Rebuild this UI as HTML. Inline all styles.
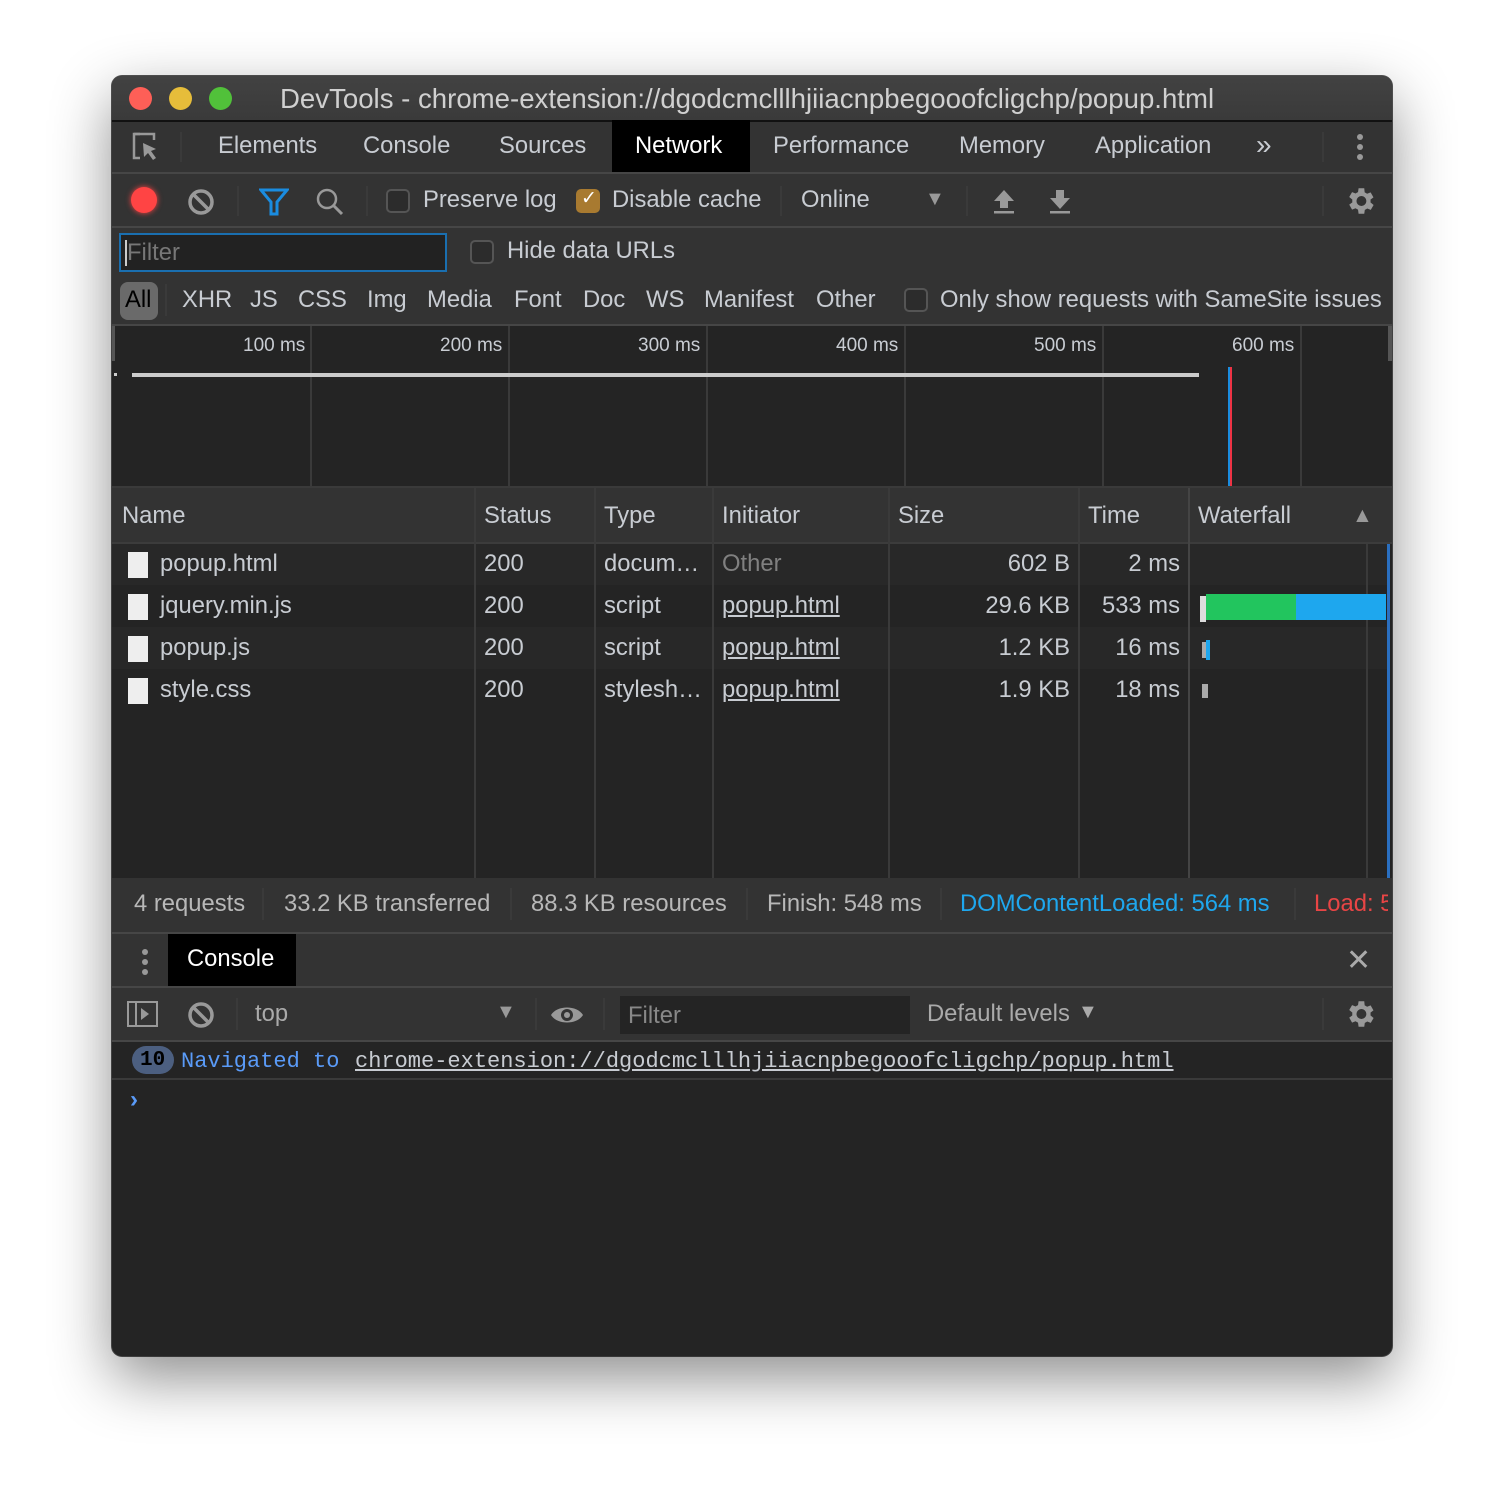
<!DOCTYPE html>
<html><head><meta charset="utf-8"><style>
*{margin:0;padding:0;box-sizing:border-box}
body{width:1504px;height:1504px;background:#fff;font-family:"Liberation Sans",Arial,sans-serif;position:relative;overflow:hidden}
.w{position:absolute;left:112px;top:76px;width:1280px;height:1280px;border-radius:10px;background:#242424;overflow:hidden;box-shadow:0 22px 60px rgba(0,0,0,.45),0 0 0 1px #555}
.a{position:absolute}
.t{position:absolute;white-space:nowrap;line-height:1;font-size:23.8px;color:#c8ccd2}
.hl{position:absolute;height:2px;background:#464646;left:0;width:1280px}
.vl{position:absolute;width:2px;background:#3a3a3a}
.cb{position:absolute;width:24px;height:24px;border:2px solid #555;border-radius:5px;background:#2c2c2c}
</style></head><body>
<div class="w">
<div class="a" style="left:0;top:0;width:1280px;height:44px;background:linear-gradient(#424242,#3a3a3a)"></div>
<div class="a" style="left:0;top:44px;width:1280px;height:2px;background:#111"></div>
<div class="a" style="left:17px;top:11px;width:23px;height:23px;border-radius:50%;background:#fe5f57"></div>
<div class="a" style="left:57px;top:11px;width:23px;height:23px;border-radius:50%;background:#e6bd3a"></div>
<div class="a" style="left:97px;top:11px;width:23px;height:23px;border-radius:50%;background:#51c13a"></div>
<div class="t" style="left:168px;top:9px;font-size:27.6px;color:#d0d0d0">DevTools - chrome-extension://dgodcmclllhjiiacnpbegooofcligchp/popup.html</div>
<div class="a" style="left:0;top:46px;width:1280px;height:50px;background:#333"></div>
<div class="a" style="left:500px;top:44px;width:138px;height:52px;background:#000"></div>
<svg class="a" style="left:18px;top:56px" width="30" height="32" viewBox="0 0 30 32"><path d="M10 2H4v24h6" fill="none" stroke="#999" stroke-width="2.5"/><path d="M4 2h20v6" fill="none" stroke="#999" stroke-width="2.5"/><path d="M13 11l13 6-5 2 5 7-3 2-5-7-4 4z" fill="#999"/></svg>
<div class="vl" style="left:68px;top:56px;height:30px"></div>
<div class="t" style="left:106px;top:58px;">Elements</div>
<div class="t" style="left:251px;top:58px">Console</div>
<div class="t" style="left:387px;top:58px">Sources</div>
<div class="t" style="left:523px;top:58px;color:#fff">Network</div>
<div class="t" style="left:661px;top:58px">Performance</div>
<div class="t" style="left:847px;top:58px">Memory</div>
<div class="t" style="left:983px;top:58px">Application</div>
<div class="t" style="left:1144px;top:55px;font-size:28px">»</div>
<div class="vl" style="left:1210px;top:56px;height:30px"></div>
<div class="a" style="left:1245px;top:58px;width:6px;height:6px;border-radius:3px;background:#999;box-shadow:0 10px #999,0 20px #999"></div>
<div class="hl" style="top:96px"></div>
<div class="a" style="left:0;top:98px;width:1280px;height:52px;background:#333"></div>
<div class="a" style="left:19px;top:111px;width:26px;height:26px;border-radius:50%;background:#f44;box-shadow:0 0 6px #f44"></div>
<svg class="a" style="left:75px;top:112px" width="28" height="28"><circle cx="14" cy="14" r="11" fill="none" stroke="#999" stroke-width="3.5"/><path d="M6 6l16 16" stroke="#999" stroke-width="3.5"/></svg>
<div class="vl" style="left:125px;top:110px;height:30px"></div>
<svg class="a" style="left:147px;top:112px" width="30" height="28"><path d="M2 2h26L18 14v12h-6V14z" fill="none" stroke="#1a8ce0" stroke-width="3"/></svg>
<svg class="a" style="left:203px;top:111px" width="30" height="30"><circle cx="12" cy="12" r="9" fill="none" stroke="#999" stroke-width="2.5"/><path d="M18 18l9 9" stroke="#999" stroke-width="3"/></svg>
<div class="vl" style="left:254px;top:110px;height:30px"></div>
<div class="cb" style="left:274px;top:113px"></div>
<div class="t" style="left:311px;top:112px">Preserve log</div>
<div class="a" style="left:464px;top:113px;width:24px;height:24px;border-radius:5px;background:#a87a30"></div>
<div class="t" style="left:469px;top:113px;font-size:19px;color:#fff">✓</div>
<div class="t" style="left:500px;top:112px">Disable cache</div>
<div class="vl" style="left:668px;top:110px;height:30px"></div>
<div class="t" style="left:689px;top:112px">Online</div>
<div class="t" style="left:813px;top:113px;font-size:20px;color:#999">▼</div>
<div class="vl" style="left:854px;top:110px;height:30px"></div>
<svg class="a" style="left:880px;top:112px" width="24" height="26"><path d="M12 2L2 13h6v7h8v-7h6z" fill="#999"/><rect x="2" y="23" width="20" height="2.5" fill="#999"/></svg>
<svg class="a" style="left:936px;top:112px" width="24" height="26"><path d="M12 21L2 10h6V2h8v8h6z" fill="#999"/><rect x="2" y="23" width="20" height="2.5" fill="#999"/></svg>
<div class="vl" style="left:1210px;top:110px;height:30px"></div>
<svg class="a" style="left:1231px;top:108px" width="34" height="34" viewBox="0 0 24 24"><path fill="#999" d="M19.4 13a7.5 7.5 0 0 0 0-2l2.1-1.6-2-3.5-2.5 1a7 7 0 0 0-1.7-1L15 3h-4l-.4 2.7a7 7 0 0 0-1.7 1l-2.5-1-2 3.5L6.6 11a7.5 7.5 0 0 0 0 2l-2.2 1.6 2 3.5 2.5-1a7 7 0 0 0 1.7 1L11 21h4l.4-2.7a7 7 0 0 0 1.7-1l2.5 1 2-3.5zM13 15.5a3.5 3.5 0 1 1 0-7 3.5 3.5 0 0 1 0 7z"/></svg>
<div class="hl" style="top:150px"></div>
<div class="a" style="left:0;top:152px;width:1280px;height:97px;background:#333"></div>
<div class="a" style="left:7px;top:157px;width:328px;height:39px;border:2px solid #1a6fb0;background:#222"></div>
<div class="a" style="left:13px;top:164px;width:2px;height:26px;background:#ccc"></div>
<div class="t" style="left:15px;top:165px;color:#777">Filter</div>
<div class="cb" style="left:358px;top:164px"></div>
<div class="t" style="left:395px;top:163px">Hide data URLs</div>
<div class="a" style="left:8px;top:206px;width:38px;height:38px;border-radius:8px;background:#6a6a6a"></div>
<div class="t" style="left:13px;top:212px;color:#000">All</div>
<div class="vl" style="left:53px;top:208px;height:32px"></div>
<div class="t" style="left:70px;top:212px">XHR</div>
<div class="t" style="left:138px;top:212px">JS</div>
<div class="t" style="left:186px;top:212px">CSS</div>
<div class="t" style="left:255px;top:212px">Img</div>
<div class="t" style="left:315px;top:212px">Media</div>
<div class="t" style="left:402px;top:212px">Font</div>
<div class="t" style="left:471px;top:212px">Doc</div>
<div class="t" style="left:534px;top:212px">WS</div>
<div class="t" style="left:592px;top:212px">Manifest</div>
<div class="t" style="left:704px;top:212px">Other</div>
<div class="cb" style="left:792px;top:212px"></div>
<div class="t" style="left:828px;top:212px">Only show requests with SameSite issues</div>
<div class="hl" style="top:248px"></div>
<div class="a" style="left:0;top:250px;width:1280px;height:161px;background:#242424"></div>
<div class="a" style="left:0;top:250px;width:3px;height:35px;background:#555"></div>
<div class="a" style="left:1276px;top:250px;width:4px;height:35px;background:#555"></div>
<div class="vl" style="left:198px;top:250px;height:161px"></div>
<div class="vl" style="left:396px;top:250px;height:161px"></div>
<div class="vl" style="left:594px;top:250px;height:161px"></div>
<div class="vl" style="left:792px;top:250px;height:161px"></div>
<div class="vl" style="left:990px;top:250px;height:161px"></div>
<div class="vl" style="left:1188px;top:250px;height:161px"></div>
<div class="t" style="left:131px;top:260px;font-size:19px">100 ms</div>
<div class="t" style="left:328px;top:260px;font-size:19px">200 ms</div>
<div class="t" style="left:526px;top:260px;font-size:19px">300 ms</div>
<div class="t" style="left:724px;top:260px;font-size:19px">400 ms</div>
<div class="t" style="left:922px;top:260px;font-size:19px">500 ms</div>
<div class="t" style="left:1120px;top:260px;font-size:19px">600 ms</div>
<div class="a" style="left:2px;top:297px;width:3px;height:3px;background:#ccc"></div>
<div class="a" style="left:20px;top:297px;width:1067px;height:4px;background:#ccc"></div>
<div class="a" style="left:1116px;top:291px;width:2px;height:120px;background:#1a8ce0"></div>
<div class="a" style="left:1118px;top:291px;width:2px;height:120px;background:#e34"></div>
<div class="a" style="left:0;top:410px;width:1280px;height:2px;background:#3a3a3a"></div>
<div class="a" style="left:0;top:412px;width:1280px;height:55px;background:#333"></div>
<div class="hl" style="top:466px;background:#3c3c3c"></div>
<div class="t" style="left:10px;top:428px">Name</div>
<div class="t" style="left:372px;top:428px">Status</div>
<div class="t" style="left:492px;top:428px">Type</div>
<div class="t" style="left:610px;top:428px">Initiator</div>
<div class="t" style="left:786px;top:428px">Size</div>
<div class="t" style="left:976px;top:428px">Time</div>
<div class="t" style="left:1086px;top:428px">Waterfall</div>
<div class="t" style="left:1240px;top:429px;font-size:21px;color:#999">▲</div>
<div class="a" style="left:0;top:468px;width:1276px;height:41px;background:#282828"></div>
<div class="a" style="left:0;top:509px;width:1276px;height:42px;background:#242424"></div>
<div class="a" style="left:0;top:551px;width:1276px;height:42px;background:#282828"></div>
<div class="a" style="left:0;top:593px;width:1276px;height:42px;background:#242424"></div>
<div class="vl" style="left:362px;top:412px;height:390px"></div>
<div class="vl" style="left:482px;top:412px;height:390px"></div>
<div class="vl" style="left:600px;top:412px;height:390px"></div>
<div class="vl" style="left:776px;top:412px;height:390px"></div>
<div class="vl" style="left:966px;top:412px;height:390px"></div>
<div class="vl" style="left:1076px;top:412px;height:390px;background:#444"></div>
<div class="vl" style="left:1254px;top:468px;height:334px"></div>
<div class="a" style="left:1275px;top:468px;width:3px;height:334px;background:#2a6fc0"></div>
<div class="a" style="left:16px;top:476px;width:20px;height:26px;background:#eee"></div>
<div class="a" style="left:16px;top:518px;width:20px;height:26px;background:#eee"></div>
<div class="a" style="left:16px;top:560px;width:20px;height:26px;background:#eee"></div>
<div class="a" style="left:16px;top:602px;width:20px;height:26px;background:#eee"></div>
<div class="t" style="left:48px;top:476px">popup.html</div>
<div class="t" style="left:48px;top:518px">jquery.min.js</div>
<div class="t" style="left:48px;top:560px">popup.js</div>
<div class="t" style="left:48px;top:602px">style.css</div>
<div class="t" style="left:372px;top:476px">200</div>
<div class="t" style="left:372px;top:518px">200</div>
<div class="t" style="left:372px;top:560px">200</div>
<div class="t" style="left:372px;top:602px">200</div>
<div class="t" style="left:492px;top:476px">docum…</div>
<div class="t" style="left:492px;top:518px">script</div>
<div class="t" style="left:492px;top:560px">script</div>
<div class="t" style="left:492px;top:602px">stylesh…</div>
<div class="t" style="left:610px;top:476px;color:#808080">Other</div>
<div class="t" style="left:610px;top:518px;text-decoration:underline">popup.html</div>
<div class="t" style="left:610px;top:560px;text-decoration:underline">popup.html</div>
<div class="t" style="left:610px;top:602px;text-decoration:underline">popup.html</div>
<div class="t" style="right:322px;top:476px">602 B</div>
<div class="t" style="right:322px;top:518px">29.6 KB</div>
<div class="t" style="right:322px;top:560px">1.2 KB</div>
<div class="t" style="right:322px;top:602px">1.9 KB</div>
<div class="t" style="right:212px;top:476px">2 ms</div>
<div class="t" style="right:212px;top:518px">533 ms</div>
<div class="t" style="right:212px;top:560px">16 ms</div>
<div class="t" style="right:212px;top:602px">18 ms</div>
<div class="a" style="left:1088px;top:520px;width:6px;height:26px;background:#ddd"></div>
<div class="a" style="left:1094px;top:518px;width:90px;height:26px;background:#22c55e"></div>
<div class="a" style="left:1184px;top:518px;width:90px;height:26px;background:#1ea7ee"></div>
<div class="a" style="left:1090px;top:566px;width:4px;height:16px;background:#aaa"></div>
<div class="a" style="left:1094px;top:564px;width:4px;height:20px;background:#1ea7ee"></div>
<div class="a" style="left:1090px;top:608px;width:6px;height:14px;background:#aaa"></div>
<div class="a" style="left:0;top:802px;width:1280px;height:54px;background:#333"></div>
<div class="t" style="left:22px;top:816px;color:#b8b8b8">4 requests</div>
<div class="vl" style="left:150px;top:812px;height:32px"></div>
<div class="t" style="left:172px;top:816px;color:#b8b8b8">33.2 KB transferred</div>
<div class="vl" style="left:398px;top:812px;height:32px"></div>
<div class="t" style="left:419px;top:816px;color:#b8b8b8">88.3 KB resources</div>
<div class="vl" style="left:634px;top:812px;height:32px"></div>
<div class="t" style="left:655px;top:816px;color:#b8b8b8">Finish: 548 ms</div>
<div class="vl" style="left:828px;top:812px;height:32px"></div>
<div class="t" style="left:848px;top:816px;color:#1ea7ee">DOMContentLoaded: 564 ms</div>
<div class="vl" style="left:1182px;top:812px;height:32px"></div>
<div class="a" style="left:1202px;top:812px;width:74px;height:32px;overflow:hidden"><div class="t" style="left:0;top:4px;color:#e84545">Load: 572 ms</div></div>
<div class="hl" style="top:856px"></div>
<div class="a" style="left:0;top:858px;width:1280px;height:52px;background:#333"></div>
<div class="a" style="left:30px;top:873px;width:6px;height:6px;border-radius:3px;background:#999;box-shadow:0 10px #999,0 20px #999"></div>
<div class="a" style="left:56px;top:858px;width:128px;height:52px;background:#000"></div>
<div class="t" style="left:75px;top:871px;color:#fff">Console</div>
<div class="t" style="left:1234px;top:870px;font-size:30px;color:#aaa">✕</div>
<div class="hl" style="top:910px"></div>
<div class="a" style="left:0;top:912px;width:1280px;height:52px;background:#333"></div>
<svg class="a" style="left:15px;top:925px" width="32" height="28"><rect x="1" y="1" width="29" height="24" fill="none" stroke="#999" stroke-width="2"/><path d="M9 1v24" stroke="#999" stroke-width="2"/><path d="M14 7l8 6-8 6z" fill="#999"/></svg>
<svg class="a" style="left:75px;top:925px" width="28" height="28"><circle cx="14" cy="14" r="11" fill="none" stroke="#999" stroke-width="3.5"/><path d="M6 6l16 16" stroke="#999" stroke-width="3.5"/></svg>
<div class="vl" style="left:124px;top:922px;height:32px"></div>
<div class="t" style="left:143px;top:926px;color:#aaa">top</div>
<div class="t" style="left:384px;top:926px;font-size:20px;color:#999">▼</div>
<div class="vl" style="left:423px;top:922px;height:32px"></div>
<svg class="a" style="left:438px;top:928px" width="34" height="22"><path d="M1 11C7 1 27 1 33 11 27 21 7 21 1 11z" fill="#999"/><circle cx="17" cy="11" r="6" fill="#333"/><circle cx="17" cy="11" r="3" fill="#999"/></svg>
<div class="vl" style="left:491px;top:922px;height:32px"></div>
<div class="a" style="left:508px;top:920px;width:290px;height:38px;background:#242424"></div>
<div class="t" style="left:516px;top:928px;color:#888">Filter</div>
<div class="t" style="left:815px;top:926px;color:#aaa">Default levels</div>
<div class="t" style="left:966px;top:926px;font-size:20px;color:#aaa">▼</div>
<div class="vl" style="left:1210px;top:922px;height:32px"></div>
<svg class="a" style="left:1231px;top:921px" width="34" height="34" viewBox="0 0 24 24"><path fill="#999" d="M19.4 13a7.5 7.5 0 0 0 0-2l2.1-1.6-2-3.5-2.5 1a7 7 0 0 0-1.7-1L15 3h-4l-.4 2.7a7 7 0 0 0-1.7 1l-2.5-1-2 3.5L6.6 11a7.5 7.5 0 0 0 0 2l-2.2 1.6 2 3.5 2.5-1a7 7 0 0 0 1.7 1L11 21h4l.4-2.7a7 7 0 0 0 1.7-1l2.5 1 2-3.5zM13 15.5a3.5 3.5 0 1 1 0-7 3.5 3.5 0 0 1 0 7z"/></svg>
<div class="hl" style="top:964px"></div>
<div class="a" style="left:0;top:966px;width:1280px;height:36px;background:#242424"></div>
<div class="a" style="left:20px;top:970px;width:42px;height:28px;border-radius:14px;background:#4c5f80"></div>
<div class="t" style="left:28px;top:974px;font-family:'Liberation Mono',monospace;font-size:21px;color:#000;font-weight:bold">10</div>
<div class="t" style="left:69px;top:975px;font-family:'Liberation Mono',monospace;font-size:22px;color:#5a9bf8">Navigated to</div>
<div class="t" style="left:243px;top:975px;font-family:'Liberation Mono',monospace;font-size:22px;color:#c8ccd2;text-decoration:underline">chrome-extension://dgodcmclllhjiiacnpbegooofcligchp/popup.html</div>
<div class="hl" style="top:1002px;background:#3a3a3a"></div>
<div class="t" style="left:18px;top:1012px;font-size:24px;color:#5a9bf8;font-weight:bold">›</div>
</div>
</body></html>
